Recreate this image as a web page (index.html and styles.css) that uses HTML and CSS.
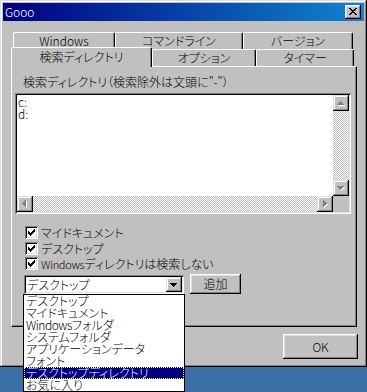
FILE: index.html
```html
<!DOCTYPE html>
<html lang="ja">
<head>
<meta charset="utf-8">
<title>Gooo</title>
<link rel="stylesheet" href="styles.css">
</head>
<body>
<div class="window">
  <div class="titlebar">
    <span class="title">Gooo</span>
    <span class="close"><svg width="16" height="14" viewBox="0 0 16 14"><path d="M4 3h2v1h1v1h2V4h1V3h2v1h-1v1h-1v1H9v1h1v1h1v1h1v1h-2V9H9V8H7v1H6v1H4V9h1V8h1V7h1V6H6V5H5V4H4z"/></svg></span>
  </div>
  <div class="client">
    <div class="tabstrip">
      <div class="tabrow">
        <div class="tab t-win"><span class="lat">Windows</span></div>
        <div class="tab t-cmd">コマンドライン</div>
        <div class="tab t-ver">バージョン</div>
      </div>
      <div class="tabrow">
        <div class="tab t-search active">検索ディレクトリ</div>
        <div class="tab t-opt">オプション</div>
        <div class="tab t-timer">タイマー</div>
      </div>
    </div>
    <div class="panel">
      <div class="label">検索ディレクトリ（検索除外は文頭に"-"）</div>
      <div class="listbox">
        <div class="list-content">
          <div class="line">c:</div>
          <div class="line">d:</div>
        </div>
        <div class="vscroll">
          <span class="sbtn"><svg width="16" height="16" viewBox="0 0 16 16"><path class="hl" transform="translate(1 1)" d="M7 6h1v1h1v1h1v1h1v1H4V9h1V8h1V7h1z"/><path class="dis" d="M7 6h1v1h1v1h1v1h1v1H4V9h1V8h1V7h1z"/></svg></span>
          <span class="track"></span>
          <span class="sbtn"><svg width="16" height="16" viewBox="0 0 16 16"><path class="hl" transform="translate(1 1)" d="M4 6h7v1h-1v1h-1v1h-1v1H7V9H6V8H5V7H4z"/><path class="dis" d="M4 6h7v1h-1v1h-1v1h-1v1H7V9H6V8H5V7H4z"/></svg></span>
        </div>
        <div class="hscroll">
          <span class="sbtn"><svg width="16" height="16" viewBox="0 0 16 16"><path class="hl" transform="translate(1 1)" d="M8 4h1v7H8v-1H7V9H6V8H5V7h1V6h1V5h1z"/><path class="dis" d="M8 4h1v7H8v-1H7V9H6V8H5V7h1V6h1V5h1z"/></svg></span>
          <span class="track"></span>
          <span class="sbtn"><svg width="16" height="16" viewBox="0 0 16 16"><path class="hl" transform="translate(1 1)" d="M6 4h1v1h1v1h1v1h1v1H9v1H8v1H7v1H6z"/><path class="dis" d="M6 4h1v1h1v1h1v1h1v1H9v1H8v1H7v1H6z"/></svg></span>
        </div>
        <div class="corner"></div>
      </div>
      <div class="checks">
        <div class="check"><span class="box"><svg width="13" height="13" viewBox="0 0 13 13"><path d="M9 3h1v1H9zM8 4h2v1H8zM3 5h1v1H3zM7 5h3v1H7zM3 6h2v1H3zM6 6h3v1H6zM3 7h5v1H3zM4 8h3v1H4zM5 9h1v1H5z"/></svg></span><span class="ctext">マイドキュメント</span></div>
        <div class="check"><span class="box"><svg width="13" height="13" viewBox="0 0 13 13"><path d="M9 3h1v1H9zM8 4h2v1H8zM3 5h1v1H3zM7 5h3v1H7zM3 6h2v1H3zM6 6h3v1H6zM3 7h5v1H3zM4 8h3v1H4zM5 9h1v1H5z"/></svg></span><span class="ctext">デスクトップ</span></div>
        <div class="check"><span class="box"><svg width="13" height="13" viewBox="0 0 13 13"><path d="M9 3h1v1H9zM8 4h2v1H8zM3 5h1v1H3zM7 5h3v1H7zM3 6h2v1H3zM6 6h3v1H6zM3 7h5v1H3zM4 8h3v1H4zM5 9h1v1H5z"/></svg></span><span class="ctext"><span class="lat2">Windows</span>ディレクトリは検索しない</span></div>
      </div>
      <div class="comborow">
        <div class="combo">
          <span class="combo-text">デスクトップ</span>
          <span class="combo-btn"><svg width="16" height="15" viewBox="0 0 16 15"><path d="M4 6h7v1h-1v1h-1v1h-1v1H7V9H6V8H5V7H4z"/></svg></span>
          <ul class="dropdown">
            <li>デスクトップ</li>
            <li>マイドキュメント</li>
            <li><span class="lat3">Windows</span>フォルダ</li>
            <li>システムフォルダ</li>
            <li>アプリケーションデータ</li>
            <li>フォント</li>
            <li class="sel">デスクトップディレクトリ</li>
            <li>お気に入り</li>
          </ul>
        </div>
        <button class="btn add">追加</button>
      </div>
    </div>
    <div class="footer"><button class="btn ok">OK</button></div>
  </div>
</div>
</body>
</html>
```

FILE: styles.css
```css
* { box-sizing: border-box; }
html, body { margin: 0; padding: 0; }
body {
  background: #3a6ea5;
  font-family: "Noto Sans CJK JP", "Noto Sans", sans-serif;
  font-size: 12px;
  font-weight: 300;
  font-feature-settings: "palt";
  color: #000;
  height: 392px;
  overflow: hidden;
}
.window {
  width: 367px;
  height: 367px;
  padding: 3px;
  background: #c0c0c0;
  box-shadow: inset -1px -1px #000, inset 1px 1px #dfdfdf, inset -2px -2px #808080, inset 2px 2px #fff;
  display: flex;
  flex-direction: column;
}
.titlebar {
  height: 18px;
  flex: none;
  display: flex;
  align-items: center;
  justify-content: space-between;
  padding: 0 3px 0 2px;
  background: linear-gradient(90deg, #000080, #1084d0);
  color: #fff;
}
.title { font-size: 12px; line-height: 14px; }
.close {
  width: 16px;
  height: 14px;
  display: block;
  background: #c0c0c0;
  box-shadow: inset -1px -1px #000, inset 1px 1px #fff, inset -2px -2px #808080, inset 2px 2px #dfdfdf;
}
.close svg { display: block; fill: #000; }
.client {
  flex: 1;
  padding-left: 8px;
  position: relative;
}
.tabstrip { margin-top: 11px; }
.tabrow {
  display: flex;
  height: 17px;
  padding-left: 2px;
}
.tab {
  height: 17px;
  border: 1px solid;
  border-color: #fff #000 transparent #fff;
  border-bottom: none;
  border-radius: 2px 2px 0 0;
  box-shadow: inset -1px 0 #808080;
  background: #c0c0c0;
  text-align: center;
  line-height: 15px;
  white-space: nowrap;
}
.lat { font-size: 12px; }
.t-win { width: 102px; }
.t-cmd { width: 128px; }
.t-ver { width: 110px; }
.t-search { width: 141px; }
.t-opt { width: 104px; }
.t-timer { width: 98px; }
.tab.active {
  position: relative;
  z-index: 2;
  margin-left: -2px;
  margin-top: -2px;
  height: 20px;
  padding-top: 1px;
}
.panel {
  width: 346px;
  height: 261px;
  border: 1px solid;
  border-color: #fff #000 #000 #fff;
  box-shadow: inset -1px -1px #808080;
  padding-top: 9px;
  position: relative;
  z-index: 1;
}
.label {
  margin-left: 11px;
  line-height: 12px;
  height: 12px;
  white-space: nowrap;
}
.listbox {
  margin: 5px 0 0 3px;
  width: 336px;
  height: 121px;
  padding: 2px;
  background: #fff;
  box-shadow: inset 1px 1px #808080, inset -1px -1px #fff, inset 2px 2px #000, inset -2px -2px #dfdfdf;
  display: grid;
  grid-template-columns: 1fr 16px;
  grid-template-rows: 1fr 16px;
}
.list-content { padding: 1px 0 0 1px; }
.line { line-height: 12px; height: 12px; }
.vscroll { display: flex; flex-direction: column; }
.hscroll { display: flex; }
.track {
  flex: 1;
  background: conic-gradient(#fff 25%, #c0c0c0 0 50%, #fff 0 75%, #c0c0c0 0) 0 0 / 2px 2px;
}
.sbtn {
  width: 16px;
  height: 16px;
  flex: none;
  display: block;
  background: #c0c0c0;
  box-shadow: inset -1px -1px #000, inset 1px 1px #dfdfdf, inset -2px -2px #808080, inset 2px 2px #fff;
}
.sbtn svg { display: block; }
.sbtn .hl { fill: #fff; }
.sbtn .dis { fill: #808080; }
.corner { background: #c0c0c0; }
.checks {
  margin: 12px 0 0 13px;
  display: flex;
  flex-direction: column;
  gap: 2.5px;
}
.check {
  display: flex;
  align-items: center;
  height: 13px;
  gap: 3px;
  white-space: nowrap;
}
.box {
  width: 13px;
  height: 13px;
  flex: none;
  background: #fff;
  box-shadow: inset 1px 1px #808080, inset -1px -1px #fff, inset 2px 2px #000, inset -2px -2px #dfdfdf;
}
.box svg { display: block; fill: #000; }
.ctext { line-height: 13px; }
.lat2 { font-size: 11px; letter-spacing: -0.3px; }
.lat3 { letter-spacing: -0.5px; }
.comborow {
  display: flex;
  align-items: flex-start;
  margin: 4px 0 0 12px;
  gap: 6px;
}
.combo {
  position: relative;
  margin-top: 1px;
  width: 160px;
  height: 19px;
  padding: 2px;
  display: flex;
  background: #fff;
  box-shadow: inset 1px 1px #808080, inset -1px -1px #fff, inset 2px 2px #000, inset -2px -2px #dfdfdf;
}
.combo-text { padding-left: 1px; line-height: 15px; flex: 1; }
.combo-btn {
  width: 16px;
  height: 15px;
  display: block;
  background: #c0c0c0;
  box-shadow: inset -1px -1px #000, inset 1px 1px #dfdfdf, inset -2px -2px #808080, inset 2px 2px #fff;
}
.combo-btn svg { display: block; fill: #000; }
.dropdown {
  position: absolute;
  left: -1px;
  top: 19px;
  width: 162px;
  height: 98px;
  margin: 0;
  padding: 0;
  list-style: none;
  border: 1px solid #000;
  background: #fff;
  z-index: 10;
}
.dropdown li {
  height: 12px;
  line-height: 12px;
  padding-left: 2px;
  white-space: nowrap;
}
.dropdown li.sel {
  background: #000080;
  color: #fff;
  outline: 1px dotted #ffff80;
  outline-offset: -1px;
}
.btn {
  font-family: inherit;
  font-size: 12px;
  font-weight: 300;
  font-feature-settings: "palt";
  color: #000;
  background: #c0c0c0;
  border: none;
  padding: 0;
  box-shadow: inset -1px -1px #000, inset 1px 1px #fff, inset -2px -2px #808080, inset 2px 2px #dfdfdf;
}
.add { width: 51px; height: 20px; line-height: 18px; }
.footer {
  display: flex;
  justify-content: flex-end;
  padding: 7px 6px 0 0;
}
.ok { width: 75px; height: 25px; }
```
